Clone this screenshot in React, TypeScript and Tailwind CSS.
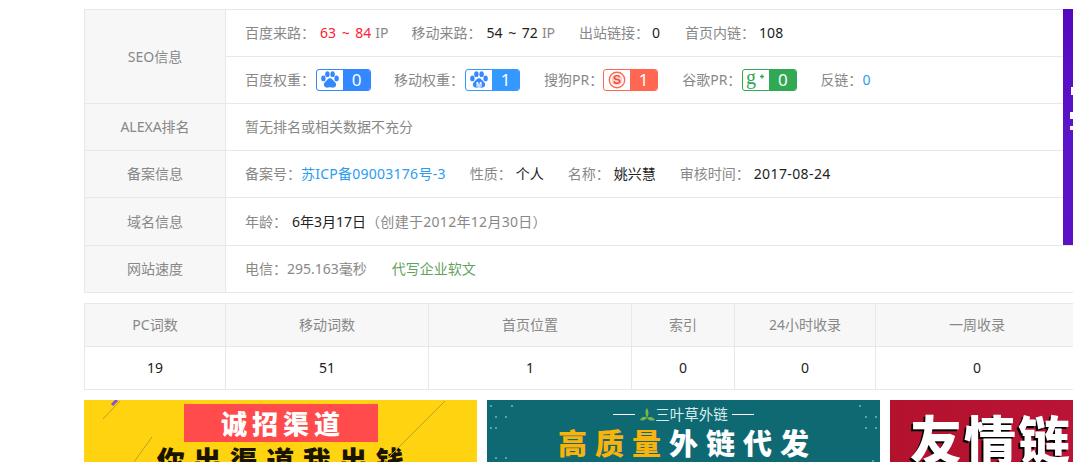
import React from "react";

const L = ({ children, className = "" }: { children: React.ReactNode; className?: string }) => (
  <span className={`text-[#888] ${className}`}>{children}</span>
);

const Paw = ({ m }: { m?: boolean }) => (
  <svg width="20" height="18" viewBox="0 0 20 18" fill="#3388ff">
    <ellipse cx="3.4" cy="7.4" rx="2.2" ry="2.9" />
    <ellipse cx="7.4" cy="3.2" rx="2.2" ry="2.9" />
    <ellipse cx="12.6" cy="3.2" rx="2.2" ry="2.9" />
    <ellipse cx="16.6" cy="7.4" rx="2.2" ry="2.9" />
    <path d="M10 7.2c2.2 0 3 2.2 4.4 3.4 1.6 1.3 2 2.6 1.6 4-.5 1.8-2.6 2.3-4.2 1.9-1.2-.3-2.4-.3-3.6 0-1.6.4-3.7-.1-4.2-1.9-.4-1.4 0-2.7 1.6-4C7 9.4 7.8 7.2 10 7.2z" />
    {m && <text x="10" y="15.6" fontSize="7" fontWeight="700" textAnchor="middle" fill="#fff" fontFamily="'Liberation Sans',sans-serif">M</text>}
  </svg>
);

const Sogou = () => (
  <svg width="18" height="18" viewBox="0 0 18 18">
    <circle cx="9" cy="9" r="7.7" fill="none" stroke="#ff6753" strokeWidth="1.4" />
    <circle cx="9" cy="9" r="5.6" fill="#fbd5cf" />
    <text x="9" y="13.2" fontSize="12.5" fontWeight="700" textAnchor="middle" fill="#f0523e" fontFamily="'Liberation Sans',sans-serif">S</text>
  </svg>
);

const GPlus = () => (
  <svg width="22" height="18" viewBox="0 0 22 18" fill="none">
    <text x="1" y="13" fontSize="20" fill="#30a854" fontFamily="'Liberation Serif',serif">g</text>
    <path d="M15 5.5h4M17 3.5v4" stroke="#30a854" strokeWidth="1.3" />
  </svg>
);

const Badge = ({ color, value, icon }: { color: string; value: string; icon: React.ReactNode }) => (
  <span
    className="mx-px inline-flex h-[22px] w-[55px] shrink-0 overflow-hidden rounded-[3px] border bg-white"
    style={{ borderColor: color }}
  >
    <span className="flex w-[26px] items-center justify-center">{icon}</span>
    <span className="flex flex-1 items-center justify-center text-[17px] text-white" style={{ backgroundColor: color }}>
      {value}
    </span>
  </span>
);

const Row = ({ label, children, last }: { label: string; children: React.ReactNode; last?: boolean }) => (
  <div className={`flex ${last ? "" : "border-b border-[#e8e8e8]"}`}>
    <div className="flex w-[141px] shrink-0 items-center justify-center border-r border-[#e8e8e8] bg-[#f7f7f7] text-[#888]">
      {label}
    </div>
    <div className="min-w-0 flex-1">{children}</div>
  </div>
);

const Line = ({ children, cls }: { children: React.ReactNode; cls: string }) => (
  <div className={`flex items-center whitespace-nowrap ${cls}`}>{children}</div>
);

const cols = [
  ["PC词数", "19", "w-[141px]"],
  ["移动词数", "51", "w-[203px]"],
  ["首页位置", "1", "w-[203px]"],
  ["索引", "0", "w-[103px]"],
  ["24小时收录", "0", "w-[141px]"],
  ["一周收录", "0", "flex-1"],
];

export default function App() {
  return (
    <div
      className="relative h-[462px] w-[1073px] overflow-hidden bg-white pl-[84px] pt-[9px] text-[14px] leading-[20px] text-[#222]"
      style={{ fontFamily: "'Noto Sans','Noto Sans CJK SC',sans-serif" }}
    >
      <div className="w-[995px]">
        <div className="border border-[#e8e8e8]">
          <Row label="SEO信息">
            <Line cls="h-[47px] border-b border-[#e8e8e8] pb-px pl-[19px]">
              <L>百度来路：</L>
              <span className="ml-[5px] text-[#ff2030] [word-spacing:2px]">63 ~ 84</span>
              <L className="ml-1">IP</L>
              <L className="ml-[23px]">移动来路：</L>
              <span className="ml-[5px] [word-spacing:2px]">54 ~ 72</span>
              <L className="ml-1">IP</L>
              <L className="ml-[24px]">出站链接：</L>
              <span className="ml-[3px]">0</span>
              <L className="ml-[25px]">首页内链：</L>
              <span className="ml-1">108</span>
            </Line>
            <Line cls="h-[46px] pl-[19px]">
              <L>百度权重：</L>
              <Badge color="#3388ff" value="0" icon={<Paw />} />
              <L className="ml-[22px]">移动权重：</L>
              <Badge color="#3399ff" value="1" icon={<Paw m />} />
              <L className="ml-[23px] -mr-px">搜狗PR：</L>
              <Badge color="#ff6753" value="1" icon={<Sogou />} />
              <L className="ml-[23px]">谷歌PR：</L>
              <Badge color="#30a854" value="0" icon={<GPlus />} />
              <L className="ml-[22px]">反链：</L>
              <span className="text-[#2b9cf0]">0</span>
            </Line>
          </Row>
          <Row label="ALEXA排名">
            <Line cls="h-[46px] pl-[19px]"><L>暂无排名或相关数据不充分</L></Line>
          </Row>
          <Row label="备案信息">
            <Line cls="h-[46px] pl-[19px]">
              <L>备案号：</L>
              <span className="tracking-[0.25px] text-[#2b9cf0]">苏ICP备09003176号-3</span>
              <L className="ml-[24px]">性质：</L>
              <span className="ml-1">个人</span>
              <L className="ml-6">名称：</L>
              <span className="ml-1">姚兴慧</span>
              <L className="ml-6">审核时间：</L>
              <span className="ml-1 tracking-[0.4px]">2017-08-24</span>
            </Line>
          </Row>
          <Row label="域名信息">
            <Line cls="h-[47px] pl-[19px]">
              <L>年龄：</L>
              <span className="ml-[5px]">6年3月17日</span>
              <L className="tracking-[0.3px] [text-spacing-trim:space-all]">（创建于2012年12月30日）</L>
            </Line>
          </Row>
          <Row label="网站速度" last>
            <Line cls="h-[46px] pl-[19px]">
              <L>电信：295.163毫秒</L>
              <span className="ml-[25px] text-[#5fa35f]">代写企业软文</span>
            </Line>
          </Row>
        </div>

        <div className="mt-[10px] border border-[#e8e8e8]">
          <div className="flex h-[43px] border-b border-[#e8e8e8] bg-[#f7f7f7] text-[#888]">
            {cols.map(([h, , w], i) => (
              <div key={i} className={`flex items-center justify-center ${w} ${i < 5 ? "border-r border-[#e8e8e8]" : ""}`}>{h}</div>
            ))}
          </div>
          <div className="flex h-[42px]">
            {cols.map(([h, v, w], i) => (
              <div key={h} className={`flex items-center justify-center ${w} ${i < 5 ? "border-r border-[#e8e8e8]" : ""}`}>{v}</div>
            ))}
          </div>
        </div>

        <div className="mt-[10px] flex gap-[10px]">
          <div className="relative flex h-[62px] w-[393px] shrink-0 flex-col items-center overflow-hidden bg-[#ffd30f]">
            <div className="mt-1 flex h-[38px] w-[194px] shrink-0 items-center justify-center bg-[#ff4b4b] pl-[5px] text-[26px] font-black tracking-[5px] text-white" style={{ fontFamily: "'Noto Sans CJK SC',sans-serif" }}>诚招渠道</div>
            <div className="pl-2 text-[28px] leading-[36px] font-black tracking-[8.5px] whitespace-nowrap text-[#1a1400]" style={{ fontFamily: "'Noto Sans CJK SC',sans-serif" }}>你出渠道我出钱</div>
            <svg className="absolute inset-0" width="393" height="62" fill="none">
              <path d="M19 19 36 1" stroke="#b9a12a" />
              <path d="M50 62 68 37" stroke="#b9a12a" />
              <path d="M300 62 361 1" stroke="#b9a12a" />
              <path d="M28 5 33 0" stroke="#8a4fd0" strokeWidth="3" />
            </svg>
          </div>
          <div className="relative flex h-[62px] w-[393px] shrink-0 flex-col items-center overflow-hidden bg-[#0f6972] text-white">
            <div className="mt-[4px] flex h-[20px] items-center text-[14.5px] leading-[20px] text-[#d8ecec]" style={{ fontFamily: "'Noto Sans CJK SC',sans-serif" }}>
              <span className="mr-1 h-px w-[22px] bg-white" />
              <svg width="16" height="14" viewBox="0 0 16 14"><path d="M1 13C3 9 6 9 8 11 6 7 6 3 8 1c2 3 2 7 0 10 3-2 6-1 8 2-3 1-6 1-8-2-2 2-4 3-7 2z" fill="#7eb548" /></svg>
              <span>三叶草外链</span>
              <span className="ml-1 h-px w-[22px] bg-white" />
            </div>
            <div className="mt-px pl-2 text-[29px] leading-[34px] font-black tracking-[8px] whitespace-nowrap" style={{ fontFamily: "'Noto Sans CJK SC',sans-serif" }}>
              <span className="text-[#f9b30c]">高质量</span>外链代发
            </div>
            <svg className="absolute inset-0" width="393" height="62" fill="#4fa5c8">
              {[[3, 5], [24, 5], [8, 16], [18, 16], [8, 27], [3, 27], [8, 57], [18, 57], [372, 5], [378, 16], [388, 16], [378, 27], [388, 27], [385, 60]].map(([x, y], i) => (
                <rect key={i} x={x} y={y} width="2" height="2" />
              ))}
            </svg>
          </div>
          <div className="flex h-[62px] w-[394px] shrink-0 overflow-hidden bg-gradient-to-r from-[#b3122c] to-[#c21540] pl-5 pt-[8px]">
            <span className="text-[52px] leading-[60px] font-black tracking-[2px] whitespace-nowrap text-white" style={{ textShadow: "-2px 2px 0 #000", fontFamily: "'Noto Sans CJK SC',sans-serif" }}>友情链</span>
          </div>
        </div>
      </div>

      <div className="absolute top-[9px] left-[1063px] h-[236px] w-[10px] bg-gradient-to-b from-[#5508bd] via-[#5c14c8] to-[#5a12c4]">
        <div className="absolute top-[78px] right-0 h-[8px] w-[2px] bg-white" />
        <div className="absolute top-[103px] right-0 h-[7px] w-[3px] bg-white" />
        <div className="absolute top-[117px] right-0 h-[4px] w-[3px] bg-white" />
      </div>
    </div>
  );
}
